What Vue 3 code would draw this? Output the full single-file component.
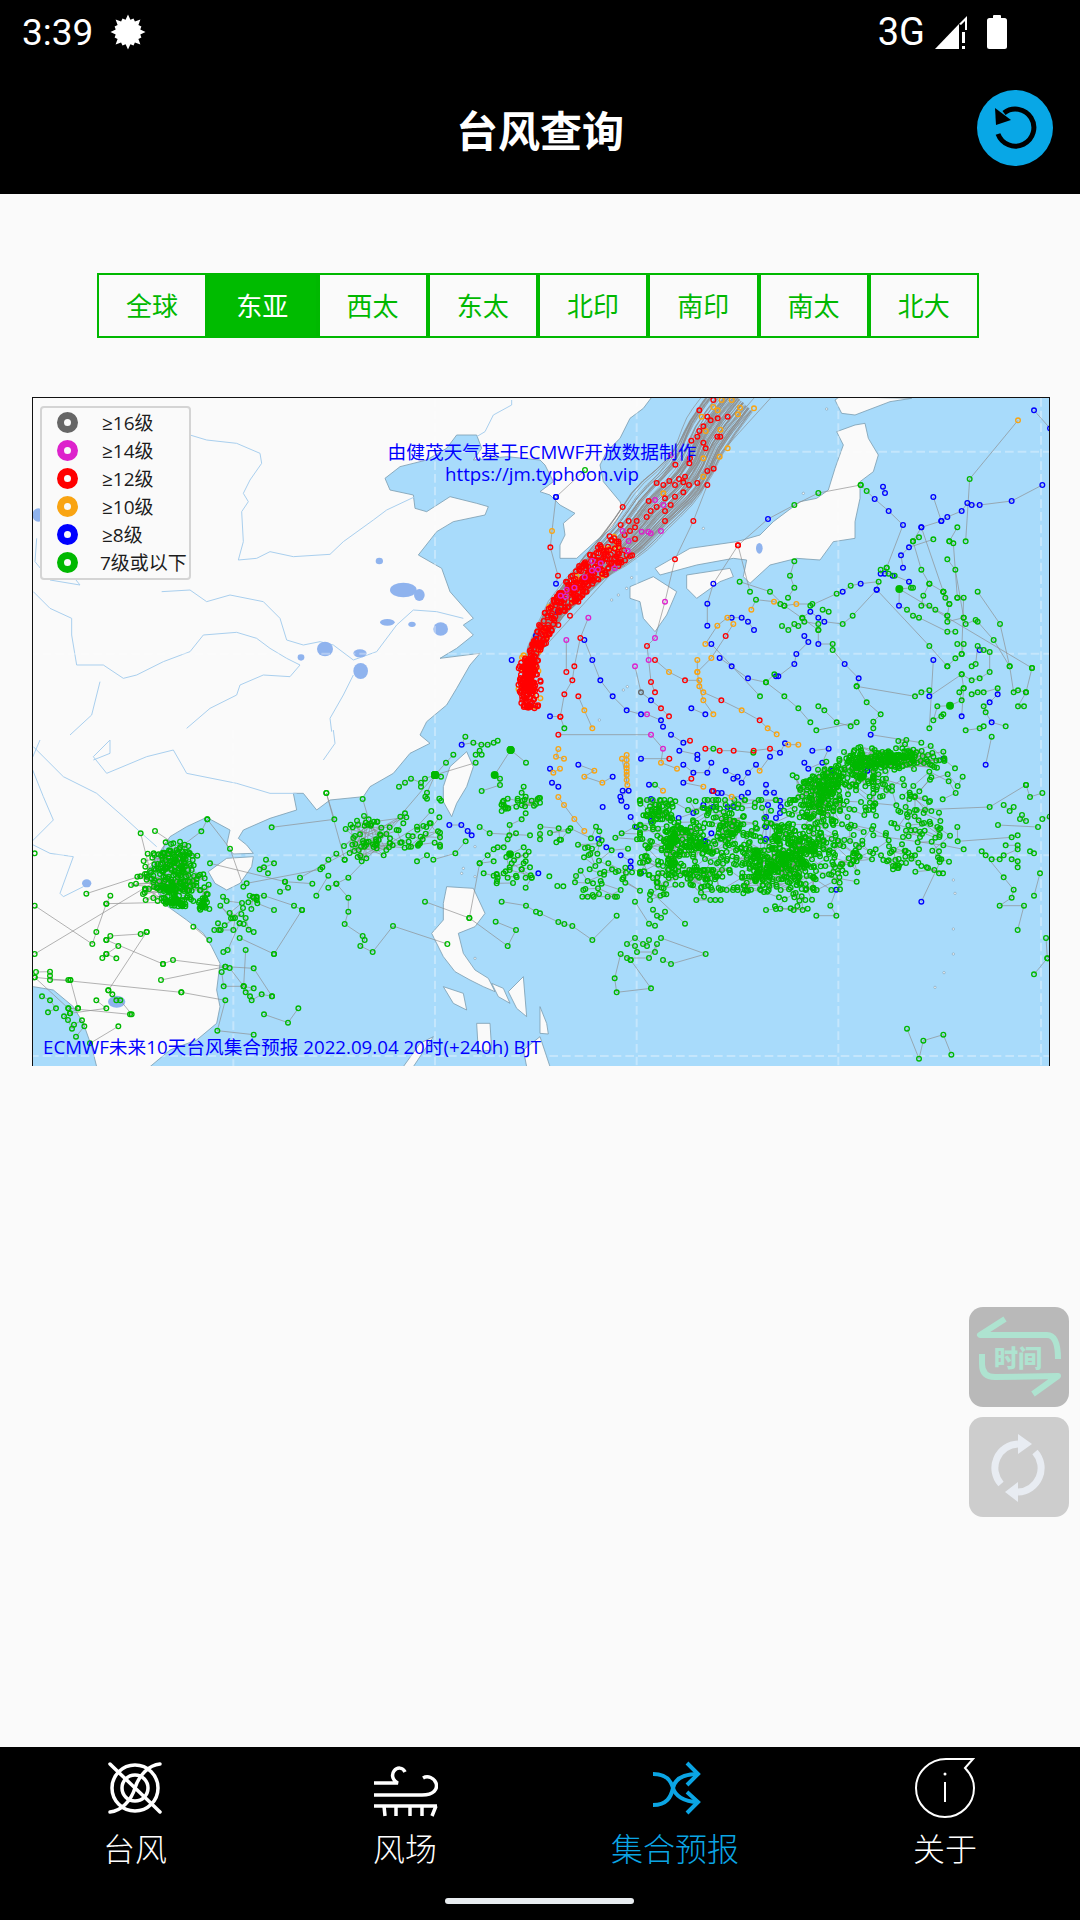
<template>
  <div class="page">
    <div class="status">
      <div class="status-left">
        <span class="clock">3:39</span>
        <svg class="sun" width="36" height="36" viewBox="0 0 36 36">
          <polygon :points="sunPoints" fill="#fff" />
        </svg>
      </div>
      <div class="status-right">
        <span class="net">3G</span>
        <svg width="34" height="36" viewBox="0 0 34 36">
          <polygon points="1,35 25,35 25,10" fill="#fff" />
          <polygon points="25,10 33,2 33,16 31,16 31,7 27,11" fill="#fff" />
          <rect x="28" y="18" width="3" height="11" fill="#fff" />
          <rect x="28" y="32" width="3" height="3" fill="#fff" />
        </svg>
        <svg class="batt" width="22" height="36" viewBox="0 0 22 36">
          <rect x="7" y="1" width="8" height="5" rx="1" fill="#fff" />
          <rect x="1" y="4" width="20" height="31" rx="2.5" fill="#fff" />
        </svg>
      </div>
    </div>

    <header class="head">
      <h1>台风查询</h1>
      <button class="reload">
        <svg width="76" height="76" viewBox="0 0 76 76">
          <circle cx="38" cy="38" r="38" fill="#08a7e6" />
          <path d="M27 23A18.500 18.500 0 1 1 21 44" fill="none" stroke="#000" stroke-width="5" />
          <polygon points="18,18 19,35 34,30" fill="#000" />
        </svg>
      </button>
    </header>

    <main class="content">
      <div class="tabs">
        <div v-for="t in regions" :key="t" class="tab" :class="{ on: t === '东亚' }">{{ t }}</div>
      </div>

      <div class="map">
        <svg class="chart" width="1017" height="668" viewBox="9 9 3051 2004">
          <rect x="0" y="0" width="3100" height="2100" fill="#a8dbfb" />
          <path v-for="(d, i) in land" :key="'l' + i" :d="d" fill="#fafafa" stroke="#7d9fb2" stroke-width="2.500" stroke-linejoin="round" />
          <circle v-for="(c, i) in islets" :key="'s' + i" :cx="c[0]" :cy="c[1]" :r="c[2]" fill="#fafafa" stroke="#7d9fb2" stroke-width="2" />
          <path :d="rivers" fill="none" stroke="#a9cfee" stroke-width="3" stroke-linejoin="round" />
          <ellipse v-for="(c, i) in lakes" :key="'w' + i" :cx="c[0]" :cy="c[1]" :rx="c[2]" :ry="c[3]" fill="#8fb3ee" />
          <path d="M1215 9V2013M610 1005V2013M1820 9V2013M2425 9V2013M3033 9V2013M1215 170H3060M0 776H3060M0 1381H3060M0 1983H3060" fill="none" stroke="#fff" stroke-opacity=".32" stroke-width="6" stroke-dasharray="26 12" />
          <path :d="trackLines" fill="none" stroke="#8c8c8c" stroke-width="2" />
          <g v-for="g in dotGroups" :key="g.color" fill="none" :stroke="g.color" stroke-width="4">
            <circle v-for="(p, i) in g.dots" :key="i" :cx="p[0]" :cy="p[1]" r="7" />
          </g>
          <g fill="#00b800">
            <circle v-for="(p, i) in solidDots" :key="i" :cx="p[0]" :cy="p[1]" r="12" />
          </g>
        </svg>

        <div class="legend">
          <div v-for="l in legend" :key="l.text" class="legend-row">
            <i class="ring" :style="{ borderColor: l.color }"></i>
            <span :class="{ wide: l.text.length > 4 }">{{ l.text }}</span>
          </div>
        </div>
        <div class="credit">
          <div>由健茂天气基于ECMWF开放数据制作</div>
          <div>https://jm.typhoon.vip</div>
        </div>
        <div class="caption">ECMWF未来10天台风集合预报 2022.09.04 20时(+240h) BJT</div>
      </div>
    </main>

    <div class="floats">
      <div class="fab fab-time">
        <svg width="100" height="100" viewBox="0 0 100 100">
          <path d="M36 12L11 28H78Q89 28 89 52M13 47V57Q13 70 26 70L89 69L64 87" fill="none" stroke="#aee3d0" stroke-width="6" stroke-linejoin="round" />
        </svg>
        <span>时间</span>
      </div>
      <div class="fab fab-sync">
        <svg width="100" height="100" viewBox="0 0 100 100">
          <path d="M32 67A24 24 0 0 1 49 27M66 35A24 24 0 0 1 49 75" fill="none" stroke="#e8ecf2" stroke-width="7" />
          <polygon points="49,17 63,27 49,37" fill="#e8ecf2" />
          <polygon points="49,65 36,75 49,85" fill="#e8ecf2" />
        </svg>
      </div>
    </div>

    <nav class="bottom">
      <div class="nav-items">
        <div class="nav-item">
          <svg width="60" height="56" viewBox="0 0 60 56">
            <g fill="none" stroke="#fff" stroke-width="3.500" stroke-linecap="round">
              <circle cx="30" cy="27" r="23" />
              <circle cx="30" cy="27" r="13" />
              <path d="M5 3C14 12 42 38 55 51M55 3C44 4 34 14 30 27C26 40 16 50 5 51" />
            </g>
          </svg>
          <span>台风</span>
        </div>
        <div class="nav-item">
          <svg width="66" height="56" viewBox="0 0 66 56">
            <g fill="none" stroke="#fff" stroke-width="3.500">
              <path d="M2 22H26C21 20 19 14 22 10C25 6 31 6 33 11" />
              <path d="M2 34H50C62 34 66 28 64 22C62 17 56 14 51 17" />
              <path d="M2 45H65" />
              <path d="M12 45L13 55M24 45L24 55M38 45V55M50 45V55M64 45L60 55" />
            </g>
          </svg>
          <span>风场</span>
        </div>
        <div class="nav-item active">
          <svg width="60" height="56" viewBox="0 0 60 56">
            <g fill="none" stroke="#0ba5e4" stroke-width="4">
              <path d="M8 13C22 13 26 20 28 27C30 34 38 41 53 41" />
              <path d="M8 44C22 44 26 36 28 27C30 18 38 13 53 13" />
              <path d="M42 2L53 13L42 24M42 31L53 41L42 52" />
            </g>
          </svg>
          <span>集合预报</span>
        </div>
        <div class="nav-item">
          <svg width="64" height="60" viewBox="0 0 64 60" class="about">
            <g fill="none" stroke="#fff" stroke-width="2">
              <path d="M60 1H33C17 1 3 14 3 30C3 46 16 59 32 59C48 59 61 46 61 30C61 22 57 15 52 10Z" />
              <path d="M32 24V44" />
            </g>
            <circle cx="32" cy="16" r="1.500" fill="#fff" />
          </svg>
          <span>关于</span>
        </div>
      </div>
      <div class="home-bar"></div>
    </nav>
  </div>
</template>

<script setup>
const regions = ['全球', '东亚', '西太', '东太', '北印', '南印', '南太', '北大']
const legend = [
  { text: '≥16级', color: '#666' },
  { text: '≥14级', color: '#dd22cc' },
  { text: '≥12级', color: '#ff0000' },
  { text: '≥10级', color: '#f9a412' },
  { text: '≥8级', color: '#0000ff' },
  { text: '7级或以下', color: '#00b800' }
]

// sun glyph of the status bar
const sunPoints = Array.from({ length: 32 }, (_, i) => {
  const a = (i * Math.PI) / 16
  const r = i % 2 ? 12.5 : i % 4 === 0 ? 17.5 : 14.5
  return (18 + r * Math.cos(a)).toFixed(1) + ',' + (18 + r * Math.sin(a)).toFixed(1)
}).join(' ')

// map is drawn in 3x units taken from four crops, one offset per crop
const Q = [[0, 0], [1530, 0], [0, 1005], [1530, 1005]]
const pt = (q, s) => s.trim().split(/\s+/).map((p) => {
  const [x, y] = p.split(',').map(Number)
  return [x + Q[q][0], y + Q[q][1]]
})
const shape = (parts) => 'M' + parts.flatMap(([q, s]) => pt(q, s)).map((p) => p.join(' ')).join('L') + 'Z'
const line = (q, s) => 'M' + pt(q, s).map((p) => p.join(' ')).join('L')

const land = [
  shape([
    [0, '0,0'],
    [1, '340,0 310,40 270,70 240,130 200,170 180,210 190,260 240,320 250,345 215,400 165,440 110,490 60,490 60,450 75,420 70,385 105,355 60,330 30,300 0,290'],
    [0, '1570,260 1545,210 1530,195 1430,185 1330,195 1355,160 1340,120 1280,120 1250,160 1190,195 1110,215 1065,250 1080,285 1150,300 1155,340 1190,350 1260,305 1340,325 1375,335 1365,360 1270,380 1220,410 1165,480 1235,520 1260,590 1330,670 1300,690 1330,720 1280,760 1230,790 1350,775 1320,810 1280,880 1250,930 1190,980'],
    [2, '1170,15 1200,40 1140,70 1090,130 1020,170 1000,200 900,210 860,240 820,190 790,190 800,240 720,265 640,300 625,325 650,345 670,370 610,372 590,345 600,300 530,262 470,290 420,320 380,380 350,430 380,480 400,520 470,570 520,610 545,650 570,700 560,780 570,830 560,880 500,930 420,960 360,1010 200,1010 185,950 160,880 130,830 70,780 10,770 0,770']
  ]),
  shape([[2, '535,425 590,385 670,380 665,410 630,460 590,480 555,460']]),
  shape([[2, '1310,65 1330,110 1310,170 1280,220 1265,260 1240,215 1240,170 1260,110']]),
  shape([[2, '1250,470 1330,475 1365,550 1335,590 1285,610 1300,670 1335,720 1375,745 1395,785 1360,770 1320,750 1275,725 1240,680 1205,610 1240,570 1240,520']]),
  shape([[2, '1240,770 1300,790 1310,840 1270,820']]),
  shape([[2, '1340,880 1380,880 1385,960 1345,965']]),
  shape([[2, '1385,760 1420,775 1440,820 1405,800']]),
  shape([[2, '1435,785 1480,740 1490,860 1460,835']]),
  shape([[2, '1480,960 1530,920 1560,1010 1490,1010']]),
  shape([[2, '1120,1010 1170,940 1210,920 1150,1010']]),
  shape([[3, '0,830 20,880 25,912 0,910']]),
  shape([[1, '885,15 905,55 945,60 1050,20 1115,10 900,5']]),
  shape([[1, '890,110 945,90 975,85 985,130 1015,180 1000,230 960,260 960,310 945,380 945,430 880,440 840,495 770,490 690,510 630,565 610,545 620,495 580,490 470,510 360,540 345,520 450,460 590,440 660,420 700,380 780,320 830,310 865,285 885,220 910,150']]),
  shape([[1, '440,540 570,520 580,545 540,560 470,610 440,580']]),
  shape([[1, '270,575 340,545 410,590 380,660 345,710 310,670 300,620 270,610']])
]

const islets = [
  [1, '790,295'], [1, '215,615'], [1, '235,600'], [1, '260,580'], [1, '490,400'], [1, '860,42'], [1, '275,548'], [1, '250,510'],
  [1, '250,885'], [1, '262,875'], [1, '178,975'], [3, '1240,450'], [3, '1245,490'], [3, '1240,597'], [3, '1240,672'],
  [3, '1212,728'], [3, '1185,772'], [2, '1300,415'], [2, '1335,350'], [2, '1335,685'], [2, '1295,430'], [2, '1335,440']
].map(([q, s]) => [...pt(q, s)[0], 3.500])

const rivers = [
  line(0, '480,120 530,135 620,145 690,175 695,205 660,255 640,295 655,320 635,350 640,440 625,495 680,490 720,470 790,485 900,478 940,440 1030,375 1070,345 1155,305'),
  line(0, '10,590 60,640 125,670 125,720 140,810 220,810 280,850 320,840 400,800 480,770 520,720 620,712 680,730 720,760 770,790 810,810 780,845 700,840 630,870 620,900 540,940 470,1000'),
  line(0, '395,590 480,585 530,620 600,600 700,620 750,670 770,735 820,750 870,740 910,750 970,795 1040,770 1100,690 1150,645 1220,650 1300,670'),
  line(0, '970,840 940,900 900,970 905,1010'),
  line(0, '1445,15 1445,30 1390,60 1365,110 1340,125'),
  line(0, '210,860 185,960 120,1020'),
  line(0, '20,430 15,500 60,555 150,570 130,545'),
  line(2, '910,0 915,40 880,90'),
  line(2, '10,50 100,140 200,190 280,260 335,310 380,350'),
  line(2, '190,90 240,70 240,30 190,80 230,130 350,80 430,60 470,130 620,160 720,190 800,190'),
  line(2, '90,490 130,380 60,370 0,340'),
  line(2, '160,470 100,500 90,490'),
  line(2, '30,30 0,100 40,200 70,270 0,340')
].join('')

const lakes = [
  [1048, 498, 11, 10], [1120, 585, 40, 22], [1168, 600, 16, 18], [1072, 682, 22, 10], [1146, 688, 11, 8], [1232, 702, 22, 20],
  [885, 762, 24, 22], [813, 787, 10, 10], [990, 775, 20, 12], [992, 828, 22, 24], [25, 360, 18, 20],
  [170, 1465, 14, 12], [260, 1820, 26, 18], [2188, 460, 10, 16]
]

// hand copied tracks: letter is the colour, G a solid blot
const tracks = [
  [1, 'o1434,76 g1289,252 g1277,439'],
  [1, 'b1482,46 b1530,100'],
  [1, 'b1507,270 b1415,318 b1319,330 b1295,330 b1282,324 b1265,348 b1222,366 b1204,378 b1144,397 g1119,439 g1144,524 g1168,566 g1210,590 g1228,627 g1222,662'],
  [1, 'g962,270 g835,294 g763,330 b684,372 r594,451 b520,566 b502,626 b502,692'],
  [1, 'r594,451 g630,590'],
  [1, 'g962,270 g980,288 b1004,312 b1046,348 b1089,390 g1040,518'],
  [1, 'b1029,275 b1035,294'],
  [1, 'b1180,306 b1204,378'],
  [1, 'r248,336 r150,480'],
  [1, 'b48,306 g135,225'],
  [1, 'b48,306 o36,408 r31,457 r54,542 b48,566'],
  [1, 'r502,270 r460,378 r405,493 m375,620 m345,729 r321,753 m326,795 r333,861 r345,892'],
  [1, 'g1180,433 b1107,457 b1083,481 b1089,518'],
  [1, 'm145,668 r121,729 r103,814 r97,856 r73,898 r61,965 g73,1000'],
  [1, 'm79,735 r79,831'],
  [1, 'b133,735 b157,795 b181,856 b218,904 b260,946 b303,958 m321,958 b363,976 b369,995'],
  [1, 'm285,814 s303,892 b333,916 r363,940 r387,964'],
  [1, 'r345,795 o387,831 r435,856 o478,856 o490,892 r544,916 o605,946 r659,976 o683,1000 o710,1018'],
  [1, 'r115,904 o133,946 o157,1000'],
  [1, 'o472,795 o472,831 o478,874 o490,916 o520,958'],
  [1, 'o496,747 o532,692 o562,668 b575,668 b605,668 b624,680 b642,705'],
  [1, 'o580,687 r557,723 o514,789 o472,831'],
  [1, 'b539,789 b575,814 b624,850 g678,862 g733,904 g775,940 g811,982'],
  [1, 'g678,862 g703,838 b708,844 b715,844 b763,807 b769,777 b805,741 b793,723'],
  [1, 'g599,560 g690,590 g733,632 g787,670 g835,705'],
  [1, 'o634,644 g648,614 o702,620 g721,627 g733,632 o769,627 g817,627 g811,632 g890,596 b908,590 g932,572 b962,566 g1016,560 b1010,584 g938,662 g908,687 b853,680 b835,668 b811,650 g787,668'],
  [1, 'g726,693 g745,705 g763,687 g775,693 g793,680 g835,687 g835,705 b835,747 g878,747 g878,765 b914,807 b956,850 g950,874 g1125,904 g1144,892 g1168,886'],
  [1, 'g950,874 g980,922 g1022,958 g1000,980 g1000,1000'],
  [1, 'g848,644 g866,650'], [1, 'g744,608 g763,578 g750,542 g763,499'],
  [1, 'g835,934 g853,946 g890,982 g932,994 g950,982 g829,1006'],
  [1, 'b1010,584 g1168,753 g1222,814'],
  [1, 'g1022,524 b1022,536 g1040,518 b1034,536 g1046,536 b1058,542 g1064,542 b1107,560 g1113,578 g1119,578 G1078,582 b1077,632 g1101,644 g1119,662 g1137,668 g1222,710 g1246,710'],
  [1, 'g1168,566 g1150,602 g1144,632 g1168,632 g1186,644 g1222,662 g1222,680 g1271,668 g1277,687 g1307,675 g1313,680 g1361,735 g1409,814 g1421,892 g1434,886 g1458,892 g1434,934 g1452,934'],
  [1, 'g1313,590 g1380,687 g1409,814'], [1, 'g1476,819 g1458,892'], [1, 'g1078,582 g1476,819'],
  [1, 'g1210,590 g1216,608 g1228,627'], [1, 'g1252,608 g1271,608 g1265,777'], [1, 'g1222,493 g1246,524 g1271,668'], [1, 'g1228,439 g1240,445 g1252,608'],
  [1, 'g1252,397 g1228,439'], [1, 'g1119,439 g1137,427'], [1, 'b1144,397 g1210,590'],
  [1, 'g1252,747 g1271,747 g1265,777 g1246,790 g1222,814'],
  [1, 'g1295,814 g1307,807 g1313,753 b1319,765 g1331,765 g1349,771 g1349,831 g1319,850 g1295,856 g1265,838 g1271,880 g1258,892 g1265,916 G1230,932 g1192,934 g1180,976 g1210,958 g1204,964'],
  [1, 'g1295,898 g1313,892 g1331,892 g1373,880 b1373,898 b1349,922 g1331,934 g1337,952 b1355,982 g1397,994'],
  [1, 'b1265,964 g1271,880'], [1, 'b1180,795 g1168,1000'], [1, 'b1168,904 g1265,838'], [1, 'g1331,994 g1319,1000 g1277,1006'],
  [1, 'g660,904 b514,747'], [1, 'b454,940 b496,958'], [1, 'b30,964 r61,965'],

  [2, 'g889,189 g913,268 g725,292'], [2, 'g889,189 g944,389'], [2, 'g998,207 g1016,268 g1046,330'], [2, 'g1125,250 g1040,345'], [2, 'g1204,243 g1161,290 g1080,340'], [2, 'g1228,262 g1170,340'],
  [2, 'g332,310 g372,470'], [2, 'g375,303 g430,340'], [2, 'g532,268 g514,304 g440,360'], [2, 'g532,268 g600,356 g640,470'],
  [2, 'g169,491 g350,432'], [2, 'g241,497 g229,521 g199,606 g187,642 g14,527'], [2, 'g229,521 g420,517'], [2, 'g14,672 g400,440'],
  [2, 'g350,606 g332,612 g241,618 g229,630'], [2, 'g265,648 g229,672 g217,684'], [2, 'g259,685 g229,672'], [2, 'g399,702 g429,690 g586,710 g671,715 g726,799'], [2, 'g399,702 g229,630'],
  [2, 'g393,750 g586,710'], [2, 'g454,787 g14,742'], [2, 'g454,787 g586,811 g562,902 g671,914'], [2, 'g235,781 g350,606'],
  [2, 'g702,853 g774,878 g805,835'], [2, 'g732,672 g629,624'], [2, 'g732,672 g816,540'], [2, 'g538,630 g490,590'], [2, 'g671,606 g629,580 g641,582'],
  [2, 'g580,666 g593,660 g629,580'], [2, 'g575,726 g581,769 g641,769'], [2, 'g599,714 g641,769 g671,775 g647,787 g660,799 g665,811 g695,793 g726,799'], [2, 'g647,660 g641,769'],
  [2, 'g732,540 g682,520 g671,503 g659,497 g702,497 g792,527 g816,540'], [2, 'g750,485 g774,473 g765,455 g540,400'], [2, 'g810,443 g1000,340'], [2, 'g847,461 g765,455'], [2, 'g859,497 g895,437'], [2, 'g895,473 g919,461 g955,443 g1040,355'],
  [2, 'g919,461 g955,503 g955,545 g944,582 g998,618 g1004,630 g991,648 g1028,666 g1089,588 g1252,642'],
  [2, 'g1185,515 g1318,564 g1349,400'], [2, 'g1318,564 g1433,648 g1458,600 g1397,575'], [2, 'g1415,515 g1488,527 g1518,545'],
  [2, 'g944,389 g919,371 g895,389 g877,412 g871,418 g650,460'], [2, 'g708,389 g732,400 g689,418 g702,412 g714,430'],
  [2, 'b1258,285 b1294,285 b1313,303 b1325,316'], [2, 'g1349,291 g1379,310 g1500,316'], [2, 'g1210,389 g1276,370 g1307,334'], [2, 'g1191,376 g1161,394'],
  [2, 'g1107,170 g1125,158 g1143,146 g1173,158 g1173,170 g1185,146 G1215,135 g1233,140'], [2, 'G1215,135 g1040,340'], [2, 'G1215,135 g1191,188 g1186,200 g1191,206'], [2, 'g1228,206 g1233,212'],
  [2, 'g1306,20 b1295,44 g1330,38 g1354,44 g1373,44 g1391,38 g1403,32'], [2, 'g1270,74 g1248,98 G1215,135'], [2, 'g1337,98 G1215,135'], [2, 'g1337,74 g1349,62 g1355,74'],
  [2, 'G1442,60 G1394,135 g1410,146 g1410,165 g1355,183'], [2, 'g1488,98 G1442,60'], [2, 'g1481,170 g1475,188 g1487,200 g1505,212'], [2, 'g1463,206 g1463,212 g1433,206 g1421,212 g1421,224 g1415,243'], [2, 'g1487,250 g1475,268 g1439,285 g1438,316 g1458,310 g1433,328 g1421,352 g1403,352 g1391,358 g1373,376 g1349,400 g1391,394'],
  [2, 'G1440,373 g1481,352'], [2, 'g1487,376 g1463,376'], [2, 'g1487,394 g1481,400 g1439,412 g1427,424 g1421,430 g1403,443 g1391,437 g1361,430'], [2, 'g1433,443 g1458,437 g1475,418 g1487,443 g1505,443 g1487,473'], [2, 'g1500,412 g1475,418'], [2, 'b1525,430 g1505,443'],
  [2, 'g14,370'], [2, 'g18,726 g60,725 g60,737 g60,750 g115,750 g121,750'], [2, 'g36,799 g60,811 g78,835 g54,847'], [2, 'g14,742 g115,835 g144,835 g120,850 g102,859 g114,870 g126,896 g132,884 g156,871 g163,889 g138,920'],
  [2, 'g199,811 g229,835 g120,850'], [2, 'g235,781 g247,793 g259,811 g271,811 g305,853 g300,853 g115,835'], [2, 'g265,889 g180,940'], [2, 'g121,750 g144,835'],

  [3, 'g1458,165 g1470,201 g1507,189'], [3, 'g1458,165 g1349,231 g1130,240'], [3, 'g1391,225 g1409,243 g1421,231'], [3, 'g1446,255 g1458,273 g1440,267'], [3, 'g1507,267 g1529,260'], [3, 'g1374,285 g1494,291'],
  [3, 'g1252,291 g1253,334 g1415,322 g1433,316'], [3, 'g1397,346 g1433,346 g1433,358 g1391,376 g1379,388 g1355,388'], [3, 'g1325,364 g1337,376 g1391,442 g1421,479 g1415,503 g1379,527 g1452,527 g1433,600'], [3, 'g1415,388 g1433,394 g1433,412'], [3, 'g1482,497 g1500,430'], [3, 'g1470,364 g1482,370'],
  [3, 'g1204,388 b1144,515'], [3, 'g1271,358 g1210,346 g1000,316'], [3, 'g1125,376 g1137,358'], [3, 'g1059,418 g1041,394 g1023,376 g999,370'], [3, 'g950,455 g848,437'], [3, 'b889,479 g871,527 g889,557 g829,557'], [3, 'g1482,733 g1522,685'], [3, 'g1518,624 g1522,685'],
  [3, 'g1101,896 g1137,986 g1150,932 g1210,914 g1234,974'], [3, 'g230,557 g157,630 g97,588 g73,582 g55,576 g0,550'], [3, 'g333,485 g435,581'], [3, 'g285,515 g327,581 g345,587'], [3, 'g339,539 g351,557 g363,563 g375,545'],
  [3, 'g363,624 g497,672 g393,702 g369,690'], [3, 'g327,630 g321,648 g309,642 g285,624 g261,642 g285,648 g291,666 g345,666 g351,642 g327,684 g261,684 g272,690 g242,672 g224,745 g230,787 g333,775 g272,690'],
  [3, 'o55,57 o48,80 o72,86'], [3, 'b115,104 o163,122 o133,140 o187,158 b218,140'], [3, 'o260,75 o260,90 o260,105 o260,115 o260,125 o260,135 o260,150 o262,165 o246,86'],
  [3, 'r55,14 m333,14 m369,56 o363,98 o411,116'], [3, 'b393,14 b430,38 r450,32'], [3, 'b418,62 b472,74 b472,87'], [3, 'r496,56 g520,56 r539,62 r581,62 g640,68 r641,62 r690,56 b720,68 b735,40 o745,44 o775,44'],
  [3, 'b430,104 b460,128 b502,128 b514,98'], [3, 'r454,146 b430,158 o490,170'], [3, 'b557,122 b593,140 b580,146 b605,158 b624,128 b648,104 o659,122 b690,80'], [3, 'r388,86 b303,86'], [3, 'b327,164 g345,164 o369,182'],
  [3, 'b248,182 b266,182 b241,200 b244,212 b260,230'], [3, 'o55,201 o72,225 o103,267 o133,303'], [3, 'b36,158 b55,170'], [3, 'b30,116 o40,128 o60,116'], [3, 'b175,327 b199,352'], [3, 'b272,261 b290,291'], [3, 'b242,376 b272,394 b272,412 b303,430'],
  [3, 'b333,273 b333,207'], [3, 'b188,231'], [3, 'b516,183 r520,183 b533,189 b545,189 o575,200 b605,200 b624,188'], [3, 'b678,164 b678,188 b702,188 b720,212 b722,230 b720,249 b708,264'], [3, 'b684,225 b678,261 b678,291 b678,327'],
  [3, 'b563,231 b581,231'], [3, 'b520,231'], [3, 'b490,225 b460,249 b416,264'], [3, 'b514,310 b496,333 b490,333'], [3, 'b793,98 b805,116 b847,98 b866,56 b817,62'], [3, 'b877,122'], [3, 'b992,14 g1144,38'], [3, 'b1210,86'], [3, 'b1337,104 g1355,20'], [3, 'b982,122']
]

const names = { g: '#00b800', b: '#0000ff', o: '#f9a412', r: '#ff0000', m: '#dd22cc', s: '#666666' }
const buckets = { b: [], g: [], o: [], r: [], m: [], s: [] }
const solidDots = []
const lines = []

tracks.forEach(([q, s]) => {
  const path = []
  s.trim().split(/\s+/).forEach((tok) => {
    const [[x, y]] = pt(q, tok.slice(1))
    path.push([x, y])
    if (tok[0] === 'G') solidDots.push([x, y])
    else buckets[tok[0]].push([x, y])
  })
  if (path.length > 1) lines.push(path)
})

// small seeded random so the picture is the same each run
let seed = 2209
const rnd = () => {
  seed = (seed + 0x6d2b79f5) | 0
  let t = Math.imul(seed ^ (seed >>> 15), 1 | seed)
  t = (t + Math.imul(t ^ (t >>> 7), 61 | t)) ^ t
  return ((t ^ (t >>> 14)) >>> 0) / 4294967296
}
const gauss = () => (rnd() + rnd() + rnd() - 1.5) / 0.75

const blob = (q, cx, cy, rx, ry, n, chain = 5) => {
  let path = []
  for (let i = 0; i < n; i++) {
    const [[x, y]] = pt(q, `${Math.round(cx + gauss() * rx)},${Math.round(cy + gauss() * ry)}`)
    buckets.g.push([x, y])
    path.push([x, y])
    if (path.length >= chain) {
      lines.push(path)
      path = []
    }
  }
}
// short random walks, so the links stay local like real tracks
const spread = (q, x0, y0, x1, y1, n) => {
  const clamp = (v, a, b) => Math.max(a, Math.min(b, v))
  let path = []
  let cx = 0
  let cy = 0
  for (let i = 0; i < n; i++) {
    if (path.length === 0) {
      cx = x0 + rnd() * (x1 - x0)
      cy = y0 + rnd() * (y1 - y0)
    } else {
      cx = clamp(cx + (rnd() - 0.5) * 130, x0, x1)
      cy = clamp(cy + (rnd() - 0.5) * 90, y0, y1)
    }
    const [[x, y]] = pt(q, `${Math.round(cx)},${Math.round(cy)}`)
    buckets.g.push([x, y])
    path.push([x, y])
    if (path.length >= 6) {
      lines.push(path)
      path = []
    }
  }
}

// dense green part of the forecast
blob(3, 1060, 85, 95, 22, 150)
blob(3, 950, 115, 38, 38, 80)
blob(3, 880, 150, 40, 40, 60)
blob(3, 830, 200, 45, 70, 110)
blob(3, 800, 340, 55, 35, 80)
blob(3, 740, 395, 65, 40, 110)
blob(3, 680, 420, 40, 30, 50)
blob(3, 720, 310, 35, 30, 36)
blob(3, 640, 370, 30, 25, 26)
blob(3, 430, 310, 45, 25, 55)
blob(3, 360, 250, 30, 25, 36)
blob(3, 460, 350, 26, 18, 22)
blob(3, 560, 290, 45, 35, 36)
blob(3, 400, 370, 22, 40, 30)
spread(3, 300, 210, 900, 480, 400)
spread(3, 600, 440, 820, 540, 50)
spread(3, 880, 130, 1230, 430, 170)
spread(3, 0, 290, 300, 500, 70)
spread(3, 330, 420, 620, 510, 60)
spread(3, 1000, 30, 1300, 240, 55)
blob(2, 430, 400, 55, 42, 110)
blob(2, 420, 465, 65, 32, 110)
blob(2, 440, 518, 32, 14, 46)
blob(2, 515, 520, 18, 35, 22)
blob(2, 1030, 320, 70, 55, 55)
spread(2, 530, 500, 680, 600, 24)
spread(2, 1100, 280, 1230, 350, 24)
spread(2, 1400, 200, 1530, 460, 30)

// the main red belt going north-east
const belt = pt(0, '1497,945 1495,800').concat(pt(1, '40,650 100,585 160,520 220,470 280,410 340,335 420,260 460,200 490,130 530,70 585,0'))
const beltAt = (t) => {
  const f = t * (belt.length - 1)
  const i = Math.min(Math.floor(f), belt.length - 2)
  const k = f - i
  return [belt[i][0] + (belt[i + 1][0] - belt[i][0]) * k, belt[i][1] + (belt[i + 1][1] - belt[i][1]) * k]
}
const beltWidth = (t) => 12 + Math.min(t * 100, 60)
for (let n = 0; n < 80; n++) {
  const off = rnd() * 2 - 1
  const wob = rnd() * 2 - 1
  const path = []
  for (let i = 0; i <= 24; i++) {
    const t = 0.06 + (i / 24) * 0.94
    const [x, y] = beltAt(t)
    const w = beltWidth(t) * (off + wob * 0.15 * Math.sin(t * 9))
    path.push([x + w * 0.72, y + w * 0.7])
  }
  lines.push(path)
}
lines.push(pt(1, '10,760 700,0'), pt(1, '40,700 650,0'))
for (let n = 0; n < 340; n++) {
  const t = 0.03 + rnd() * 0.42
  const [x, y] = beltAt(t)
  const w = beltWidth(t) * (rnd() * 2 - 1) * 0.85
  const p = [x + w * 0.72, y + w * 0.7]
  const roll = rnd()
  if (roll < 0.07) buckets.o.push(p)
  else if (t > 0.22 && roll < 0.13) buckets.m.push(p)
  else buckets.r.push(p)
}
for (let n = 0; n < 150; n++) buckets.r.push([1497 + gauss() * 22, 795 + rnd() * 145])
for (let n = 0; n < 14; n++) buckets.o.push([1492 + gauss() * 26, 780 + rnd() * 160])

const beltDots = 'r478,46 r520,15 o545,15 o575,15 o600,38 o642,40 o520,36 o533,46 o485,65 r502,65 r512,76 r533,70 r563,65 o594,58 r490,94 r478,108 o497,108 o541,104 r532,125 r541,125 r472,125 r454,137 r490,143 r497,160 o563,160 o539,185 o490,190 r450,190 r448,205 r406,209 r521,221 r502,228 o490,245 r472,264 r447,270 r350,264 r370,270 r388,258 r405,270 r417,252 r435,245 r430,262 r430,292 r405,305 o370,295 r326,318 m345,315 r375,310 m370,330 r392,330 r350,336 r375,348 r332,348 r320,366 r375,378 r290,378 r266,378 r285,397 r242,390 m248,408 r270,408 m305,410 m325,410 m332,415 m363,408 r254,420 r285,432 m266,438 r230,440 r225,460 r225,490 r205,518 o190,462 r175,475 r187,535 r133,505 m157,498 m182,505 r163,518 r97,542 r78,560 m103,578 r157,566 r115,620 r140,590 m62,602 r90,662 r55,690 r18,745 m392,180'
beltDots.split(' ').forEach((tok) => buckets[tok[0]].push(pt(1, tok.slice(1))[0]))
const topBlue = 'b54,650'
buckets.b.push(pt(1, topBlue.slice(1))[0], ...pt(0, '1445,795 1482,874 1505,934 1518,722'))

const trackLines = lines.map((p) => 'M' + p.map((c) => c[0].toFixed(0) + ' ' + c[1].toFixed(0)).join('L')).join('')
const dotGroups = ['b', 'g', 'o', 'r', 'm', 's'].map((k) => ({ color: names[k], dots: buckets[k] }))
</script>

<style>
html,
body {
  margin: 0;
  background: #fafafa;
}
</style>

<style scoped>
.page {
  position: relative;
  display: flex;
  flex-direction: column;
  width: 1080px;
  height: 1920px;
  overflow: hidden;
  background: #fafafa;
  font-family: Roboto, "Noto Sans CJK SC", sans-serif;
}

.status {
  display: flex;
  justify-content: space-between;
  align-items: center;
  height: 64px;
  padding: 0 72px 0 22px;
  background: #000;
  color: #fff;
  font-size: 37px;
}
.status-left,
.status-right {
  display: flex;
  align-items: center;
}
.sun {
  margin-left: 17px;
}
.net {
  font-size: 38px;
}
.status-right svg {
  margin-left: 9px;
}
.status-right .batt {
  margin-left: 18px;
}

.head {
  position: relative;
  display: flex;
  justify-content: center;
  align-items: center;
  height: 130px;
  background: #000;
}
.head h1 {
  margin: 0 0 2px;
  color: #fff;
  font-family: "Noto Sans CJK SC", sans-serif;
  font-size: 42px;
  font-weight: 700;
}
.reload {
  position: absolute;
  top: 26px;
  right: 27px;
  padding: 0;
  border: 0;
  background: none;
  line-height: 0;
}

.content {
  flex: 1;
}
.tabs {
  display: flex;
  width: 882px;
  margin: 79px 0 0 97px;
}
.tab {
  box-sizing: border-box;
  flex: 1;
  height: 65px;
  border: 2px solid #00b800;
  color: #00b800;
  font-family: "Noto Sans CJK SC", sans-serif;
  font-size: 26px;
  line-height: 60px;
  text-align: center;
}
.tab.on {
  background: #00bb00;
  color: #fff;
}

.map {
  position: relative;
  box-sizing: border-box;
  width: 1018px;
  height: 669px;
  margin: 59px 0 0 32px;
  border: solid #111;
  border-width: 1px 1px 0;
  overflow: hidden;
}
.chart {
  display: block;
}
.legend {
  position: absolute;
  top: 8px;
  left: 7px;
  box-sizing: border-box;
  width: 151px;
  height: 174px;
  padding: 0 0 0 15px;
  border: 2.500px solid #d4d4d4;
  border-radius: 4px;
  background: #fafafa;
  color: #1c1c1c;
  font-family: "Open Sans", "Noto Sans CJK SC", sans-serif;
  font-size: 19px;
}
.legend-row {
  display: flex;
  align-items: center;
  height: 28px;
}
.ring {
  box-sizing: border-box;
  flex: none;
  width: 21px;
  height: 21px;
  border: 7px solid;
  border-radius: 50%;
  background: #fafafa;
}
.legend-row span {
  margin-left: 24px;
  white-space: nowrap;
}
.legend-row span.wide {
  margin-left: 22px;
}
.credit {
  position: absolute;
  top: 43px;
  left: 353px;
  width: 312px;
  color: #0000ff;
  font-family: "Open Sans", "Noto Sans CJK SC", sans-serif;
  font-size: 18.7px;
  line-height: 21.5px;
  text-align: center;
  white-space: nowrap;
}
.caption {
  position: absolute;
  bottom: 7px;
  left: 10px;
  color: #0000ff;
  font-family: "Open Sans", "Noto Sans CJK SC", sans-serif;
  font-size: 18.7px;
  line-height: 24px;
  white-space: nowrap;
}

.floats {
  position: absolute;
  top: 1307px;
  right: 11px;
  display: flex;
  flex-direction: column;
  gap: 10px;
}
.fab {
  position: relative;
  width: 100px;
  height: 100px;
  border-radius: 14px;
}
.fab svg {
  display: block;
}
.fab-time {
  background: #b9b9b9;
}
.fab-time span {
  position: absolute;
  top: 32px;
  left: 25px;
  color: #aee3d0;
  font-family: "Noto Sans CJK SC", sans-serif;
  font-size: 24px;
  font-weight: 900;
  line-height: 36px;
}
.fab-sync {
  background: #cdcdcd;
}

.bottom {
  position: relative;
  height: 173px;
  background: #000;
}
.nav-items {
  display: flex;
}
.nav-item {
  position: relative;
  flex: 0 0 270px;
  height: 125px;
  color: #fff;
  font-family: "Noto Sans CJK SC", sans-serif;
  font-size: 32px;
  font-weight: 300;
  text-align: center;
}
.nav-item svg {
  display: block;
  margin: 14px auto 0;
}
.nav-item svg.about {
  margin-top: 11px;
}
.nav-item span {
  position: absolute;
  top: 77px;
  left: 0;
  right: 0;
  line-height: 46px;
}
.nav-item.active {
  color: #0ba5e4;
}
.home-bar {
  position: absolute;
  left: 445px;
  top: 151px;
  width: 189px;
  height: 6px;
  border-radius: 3px;
  background: #e8ecf0;
}
</style>
